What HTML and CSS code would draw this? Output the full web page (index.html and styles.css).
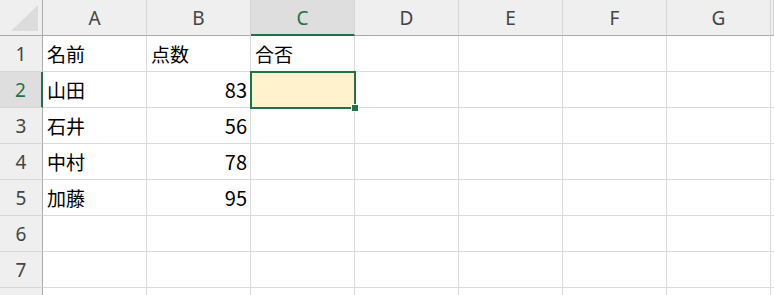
FILE: index.html
```html
<!DOCTYPE html>
<html lang="ja">
<head>
  <meta charset="UTF-8" />
  <title>Sheet</title>
  <link rel="stylesheet" href="styles.css">
</head>
<body>
  <div class="sheet">
    <div class="corner">
      <svg width="42" height="35" viewBox="0 0 42 35">
        <polygon points="11,31 38,31 38,5" fill="#dcdcdc" />
      </svg>
    </div>
    <div class="col-head">A</div>
    <div class="col-head">B</div>
    <div class="col-head active">C</div>
    <div class="col-head">D</div>
    <div class="col-head">E</div>
    <div class="col-head">F</div>
    <div class="col-head">G</div>
    <div class="col-head"></div>

    <div class="row-head">1</div>
    <div class="cell">名前</div>
    <div class="cell">点数</div>
    <div class="cell">合否</div>
    <div class="cell"></div><div class="cell"></div><div class="cell"></div><div class="cell"></div><div class="cell"></div>

    <div class="row-head active">2</div>
    <div class="cell">山田</div>
    <div class="cell num">83</div>
    <div class="cell selected"><span class="sel-box"><span class="handle"></span></span></div>
    <div class="cell"></div><div class="cell"></div><div class="cell"></div><div class="cell"></div><div class="cell"></div>

    <div class="row-head">3</div>
    <div class="cell">石井</div>
    <div class="cell num">56</div>
    <div class="cell"></div><div class="cell"></div><div class="cell"></div><div class="cell"></div><div class="cell"></div><div class="cell"></div>

    <div class="row-head">4</div>
    <div class="cell">中村</div>
    <div class="cell num">78</div>
    <div class="cell"></div><div class="cell"></div><div class="cell"></div><div class="cell"></div><div class="cell"></div><div class="cell"></div>

    <div class="row-head">5</div>
    <div class="cell">加藤</div>
    <div class="cell num">95</div>
    <div class="cell"></div><div class="cell"></div><div class="cell"></div><div class="cell"></div><div class="cell"></div><div class="cell"></div>

    <div class="row-head">6</div>
    <div class="cell"></div><div class="cell"></div><div class="cell"></div><div class="cell"></div><div class="cell"></div><div class="cell"></div><div class="cell"></div><div class="cell"></div>

    <div class="row-head">7</div>
    <div class="cell"></div><div class="cell"></div><div class="cell"></div><div class="cell"></div><div class="cell"></div><div class="cell"></div><div class="cell"></div><div class="cell"></div>

    <div class="row-head"></div>
    <div class="cell"></div><div class="cell"></div><div class="cell"></div><div class="cell"></div><div class="cell"></div><div class="cell"></div><div class="cell"></div><div class="cell"></div>
  </div>
</body>
</html>
```

FILE: styles.css
```css
* {
  margin: 0;
  padding: 0;
  box-sizing: border-box;
}
body {
  background: #fff;
  width: 774px;
  height: 295px;
  overflow: hidden;
  font-family: "Noto Sans CJK JP", "Noto Sans", sans-serif;
}
.sheet {
  display: grid;
  grid-template-columns: 43px repeat(7, 104px) 3px;
  grid-template-rows: repeat(8, 36px) 7px;
  height: 295px;
  overflow: hidden;
}
.corner {
  background: #efefef;
  border-right: 1px solid #ababab;
  border-bottom: 1px solid #ababab;
}
.corner svg {
  display: block;
}
.col-head {
  background: #efefef;
  border-right: 1px solid #d6d6d6;
  border-bottom: 1px solid #ababab;
  color: #444;
  font-family: "Noto Sans", sans-serif;
  font-size: 19px;
  display: flex;
  align-items: center;
  justify-content: center;
  padding-top: 1px;
}
.col-head.active {
  background: #dedede;
  color: #217346;
  border-bottom: 2px solid #217346;
  padding-top: 2px;
}
.row-head {
  background: #efefef;
  border-right: 1px solid #ababab;
  border-bottom: 1px solid #d6d6d6;
  color: #444;
  font-family: "Noto Sans", sans-serif;
  font-size: 19px;
  display: flex;
  align-items: center;
  justify-content: center;
}
.row-head.active {
  background: #dedede;
  color: #217346;
  border-right: 2px solid #217346;
}
.cell {
  border-right: 1px solid #dadada;
  border-bottom: 1px solid #dadada;
  color: #000;
  font-size: 19px;
  display: flex;
  align-items: center;
  padding: 0 3px 0 4px;
  white-space: nowrap;
}
.sheet > :nth-last-child(-n+9) {
  border-bottom: none;
}
.cell.num {
  justify-content: flex-end;
  font-size: 20px;
}
.cell.selected {
  position: relative;
  background: #fff2cc;
}
.sel-box {
  position: absolute;
  top: -1px;
  left: -1px;
  right: -2px;
  bottom: -2px;
  border: 2px solid #217346;
}
.handle {
  position: absolute;
  right: -4px;
  bottom: -4px;
  width: 6px;
  height: 6px;
  background: #217346;
  outline: 1px solid #fff;
}
```
